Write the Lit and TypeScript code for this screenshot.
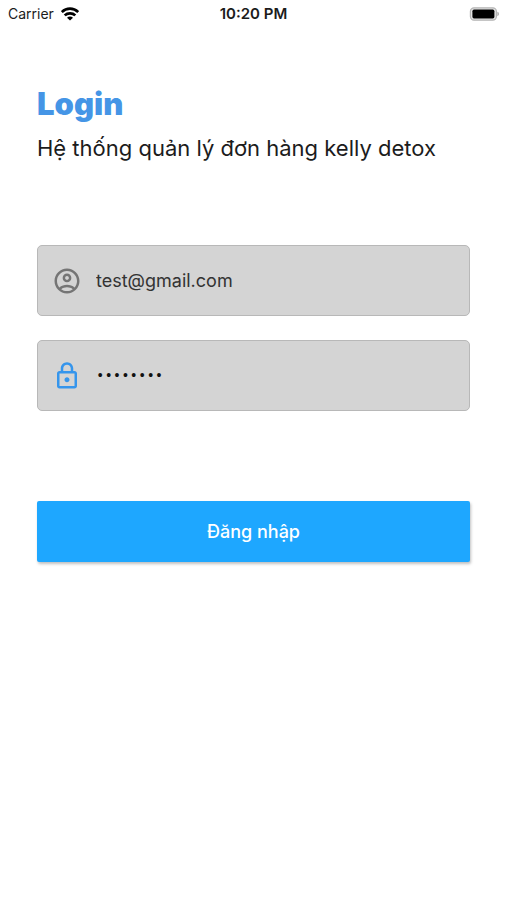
import { LitElement, html, css } from "lit";
import { customElement } from "lit/decorators.js";

@customElement("status-bar")
class StatusBar extends LitElement {
  static styles = css`
    :host {
      display: grid;
      grid-template-columns: 1fr auto 1fr;
      align-items: center;
      height: 28px;
      padding: 0 8px;
      font-size: 14px;
      line-height: 20px;
      color: #1c1c1c;
    }
    .carrier {
      display: flex;
      align-items: center;
      gap: 7px;
    }
    .time {
      font-size: 15px;
      font-weight: 600;
    }
    .battery {
      justify-self: end;
    }
    svg {
      display: block;
    }
  `;

  render() {
    return html`
      <div class="carrier">
        <span>Carrier</span>
        <svg width="18" height="14" viewBox="0 0 18 14" fill="none" stroke="#000" stroke-width="2.7" aria-label="Wi-Fi">
          <path d="M0.8 5C5.4 0.6 12.6 0.6 17.2 5" />
          <path d="M3.7 8.4C6.6 5.6 11.4 5.6 14.3 8.4" />
          <path d="M9 13.6L6 10.7C7.7 9.1 10.3 9.1 12 10.7Z" fill="#000" stroke="none" />
        </svg>
      </div>
      <time class="time">10:20 PM</time>
      <svg class="battery" width="30" height="14" viewBox="0 0 30 14" aria-label="Battery full">
        <rect x="1.4" y="0.8" width="26" height="12.4" rx="3.6" fill="#e4e4e4" stroke="#b4b4b4" stroke-width="1.2" />
        <rect x="3.4" y="2.6" width="22" height="8.8" rx="1.6" fill="#000" />
        <path d="M28.4 4.8C30.4 5.4 30.4 8.6 28.4 9.2Z" fill="#a8a8a8" />
      </svg>
    `;
  }
}

@customElement("app-root")
class AppRoot extends LitElement {
  static styles = css`
    :host {
      display: block;
      min-height: 100vh;
      background: #fff;
      font-family: Inter, "Noto Sans", sans-serif;
      color: #1c1c1c;
    }
    * {
      box-sizing: border-box;
    }
    main {
      padding: 56px 37px 0;
    }
    h1 {
      margin: 0;
      font-size: 31px;
      line-height: 40px;
      font-weight: 900;
      color: #4595e6;
    }
    .subtitle {
      margin: 8px 0 0;
      font-size: 22px;
      line-height: 32px;
    }
    form {
      display: flex;
      flex-direction: column;
      margin-top: 81px;
    }
    .fields {
      display: flex;
      flex-direction: column;
      gap: 24px;
    }
    .field {
      display: flex;
      align-items: center;
      gap: 14px;
      height: 71px;
      padding: 0 14px;
      border: 1px solid #b8b8b8;
      border-radius: 5px;
      background: #d4d4d4;
    }
    .icon {
      flex: none;
      width: 30px;
      height: 30px;
      fill: #757575;
    }
    .lock {
      fill: #3595ec;
    }
    input {
      flex: 1;
      min-width: 0;
      height: 40px;
      padding: 0;
      border: 0;
      outline: 0;
      background: none;
      font: inherit;
      font-size: 18px;
      color: #333;
    }
    .password {
      font-family: "Liberation Mono", monospace;
      font-size: 14px;
      color: #111;
    }
    button {
      height: 61px;
      margin-top: 90px;
      border: 0;
      border-radius: 2px;
      background: #1ea7ff;
      box-shadow: 1px 2px 3px rgba(0, 0, 0, 0.25);
      font: inherit;
      font-size: 18px;
      font-weight: 500;
      color: #fff;
    }
  `;

  render() {
    return html`
      <status-bar></status-bar>
      <main>
        <h1>Login</h1>
        <p class="subtitle">Hệ thống quản lý đơn hàng kelly detox</p>
        <form @submit=${(e: Event) => e.preventDefault()}>
          <div class="fields">
            <label class="field">
              <svg class="icon" viewBox="0 0 24 24" role="img" aria-label="Email">
                <path d="M12 2C6.48 2 2 6.48 2 12s4.48 10 10 10 10-4.48 10-10S17.52 2 12 2zM7.35 18.5C8.66 17.56 10.26 17 12 17s3.34.56 4.65 1.5C15.34 19.44 13.74 20 12 20s-3.34-.56-4.65-1.5zm10.79-1.38C16.45 15.8 14.32 15 12 15s-4.45.8-6.14 2.12C4.7 15.73 4 13.95 4 12c0-4.42 3.58-8 8-8s8 3.58 8 8c0 1.95-.7 3.73-1.86 5.12zM12 6c-1.93 0-3.5 1.57-3.5 3.5S10.07 13 12 13s3.5-1.57 3.5-3.5S13.93 6 12 6zm0 5c-.83 0-1.5-.67-1.5-1.5S11.17 8 12 8s1.5.67 1.5 1.5S12.83 11 12 11z" />
              </svg>
              <input type="email" value="test@gmail.com" />
            </label>
            <label class="field">
              <svg class="icon lock" viewBox="0 0 24 24" role="img" aria-label="Password">
                <path d="M18 8h-1V6c0-2.76-2.24-5-5-5S7 3.24 7 6v2H6c-1.1 0-2 .9-2 2v10c0 1.1.9 2 2 2h12c1.1 0 2-.9 2-2V10c0-1.1-.9-2-2-2zM9 6c0-1.66 1.34-3 3-3s3 1.34 3 3v2H9V6zm9 14H6V10h12v10zm-6-3c1.1 0 2-.9 2-2s-.9-2-2-2-2 .9-2 2 .9 2 2 2z" />
              </svg>
              <input class="password" type="password" value="password" />
            </label>
          </div>
          <button type="submit">Đăng nhập</button>
        </form>
      </main>
    `;
  }
}
